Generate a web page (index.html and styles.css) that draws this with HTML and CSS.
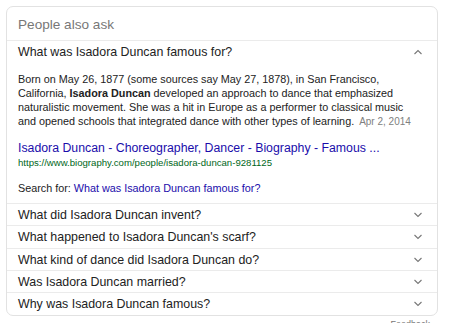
FILE: index.html
```html
<!DOCTYPE html>
<html>
<head>
<meta charset="utf-8">
<link rel="stylesheet" href="styles.css">
</head>
<body>
<div class="card">
  <div class="card-head">People also ask</div>
  <div class="qa open">
    <div class="q">
      <span>What was Isadora Duncan famous for?</span>
      <svg class="chev" width="10" height="6" viewBox="0 0 10 6"><path d="M1.5 5 L5 1.5 L8.5 5" fill="none" stroke="#777" stroke-width="1.1"/></svg>
    </div>
    <div class="answer">
      <p class="snippet">Born on May 26, 1877 (some sources say May 27, 1878), in San Francisco,<br>California, <b>Isadora Duncan</b> developed an approach to dance that emphasized<br>naturalistic movement. She was a hit in Europe as a performer to classical music<br>and opened schools that integrated dance with other types of learning. <span class="date">Apr 2, 2014</span></p>
      <a class="title">Isadora Duncan - Choreographer, Dancer - Biography - Famous ...</a>
      <div class="url">https://www.biography.com/people/isadora-duncan-9281125</div>
      <div class="search">Search for: <a>What was Isadora Duncan famous for?</a></div>
    </div>
  </div>
  <div class="qa"><div class="q"><span>What did Isadora Duncan invent?</span><svg class="chev" width="10" height="6" viewBox="0 0 10 6"><path d="M1.5 1 L5 4.5 L8.5 1" fill="none" stroke="#777" stroke-width="1.1"/></svg></div></div>
  <div class="qa tall"><div class="q"><span>What happened to Isadora Duncan's scarf?</span><svg class="chev" width="10" height="6" viewBox="0 0 10 6"><path d="M1.5 1 L5 4.5 L8.5 1" fill="none" stroke="#777" stroke-width="1.1"/></svg></div></div>
  <div class="qa"><div class="q"><span>What kind of dance did Isadora Duncan do?</span><svg class="chev" width="10" height="6" viewBox="0 0 10 6"><path d="M1.5 1 L5 4.5 L8.5 1" fill="none" stroke="#777" stroke-width="1.1"/></svg></div></div>
  <div class="qa"><div class="q"><span>Was Isadora Duncan married?</span><svg class="chev" width="10" height="6" viewBox="0 0 10 6"><path d="M1.5 1 L5 4.5 L8.5 1" fill="none" stroke="#777" stroke-width="1.1"/></svg></div></div>
  <div class="qa tall"><div class="q"><span>Why was Isadora Duncan famous?</span><svg class="chev" width="10" height="6" viewBox="0 0 10 6"><path d="M1.5 1 L5 4.5 L8.5 1" fill="none" stroke="#777" stroke-width="1.1"/></svg></div></div>
</div>
<div class="feedback">Feedback</div>
</body>
</html>
```
FILE: styles.css
```css
html, body { margin: 0; padding: 0; background: #fff; }
body { font-family: "Liberation Sans", Arial, sans-serif; color: #222; padding: 6px 12px 0 6px; }
.card {
  border: 1px solid #e2e2e2;
  border-radius: 7px;
  overflow: hidden;
}
.card-head {
  height: 33px;
  box-sizing: border-box;
  padding: 10px 0 0 11px;
  font-size: 13.6px;
  line-height: 16px;
  color: #777;
}
.qa { border-top: 1px solid #ebebeb; }
.q {
  height: 21px;
  display: flex;
  align-items: center;
  justify-content: space-between;
  padding: 0 14px 0 11px;
  font-size: 12.4px;
  color: #222;
}
.qa.open .q { height: 22px; }
.qa.tall .q { height: 22px; }
.chev { display: block; }
.answer { padding: 9px 11px 7px 11px; font-size: 10.8px; }
.snippet { margin: 0; line-height: 14px; color: #222; white-space: nowrap; }
.date { color: #808080; font-size: 10px; margin-left: 2px; }
.title { display: block; margin-top: 12px; color: #1a0dab; font-size: 12.3px; line-height: 15px; }
.url { color: #006621; font-size: 9.6px; line-height: 13px; }
.search { margin-top: 12px; line-height: 15px; color: #222; }
.search a { color: #1a0dab; }
.feedback { text-align: right; padding-right: 8px; font-size: 9px; color: #777; margin-top: 3px; }
```
